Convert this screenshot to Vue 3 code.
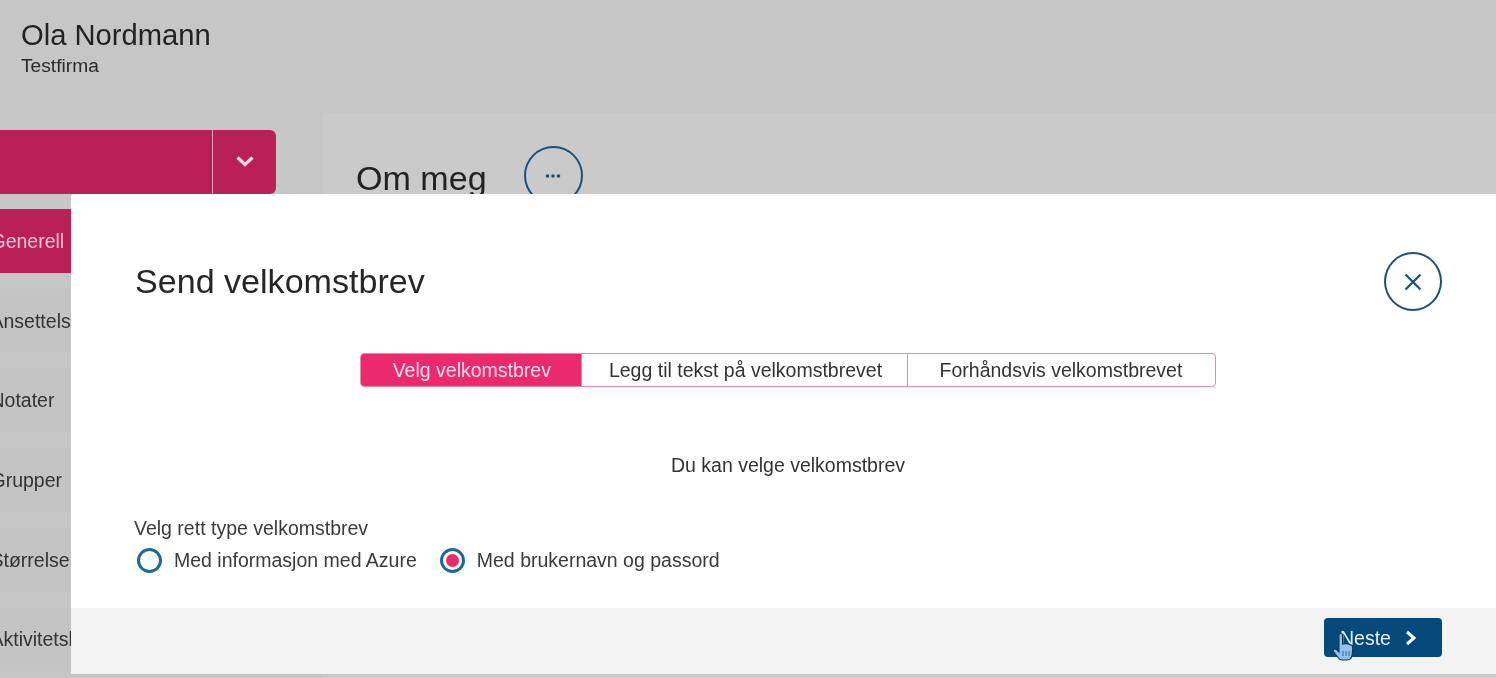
<script setup>
const navItems = [
  { label: 'Generell', active: true },
  { label: 'Ansettelse' },
  { label: 'Notater' },
  { label: 'Grupper' },
  { label: 'Størrelse' },
  { label: 'Aktivitetslogg' }
]
const steps = [
  { label: 'Velg velkomstbrev', active: true },
  { label: 'Legg til tekst på velkomstbrevet' },
  { label: 'Forhåndsvis velkomstbrevet' }
]
</script>

<template>
  <div class="page">
    <header class="head">
      <div class="name">Ola Nordmann</div>
      <div class="company">Testfirma</div>
    </header>
    <div class="body">
      <aside class="side">
        <div class="menu-btn">
          <div class="menu-label"></div>
          <div class="menu-arrow">
            <svg width="20" height="12" viewBox="0 0 20 12" fill="none"><path d="M2.5 2.5 L10 9.5 L17.5 2.5" stroke="#f3dbe3" stroke-width="3.4"/></svg>
          </div>
        </div>
        <nav class="nav">
          <div v-for="n in navItems" :key="n.label" class="nav-item" :class="{ on: n.active }">{{ n.label }}</div>
        </nav>
      </aside>
      <main class="main">
        <h1 class="about">Om meg</h1>
        <div class="round dots">
          <svg width="20" height="6" viewBox="0 0 20 6"><circle cx="4.5" cy="3" r="1.8" fill="#1f4a6b"/><circle cx="10" cy="3" r="1.8" fill="#1f4a6b"/><circle cx="15.5" cy="3" r="1.8" fill="#1f4a6b"/></svg>
        </div>
      </main>
    </div>

    <section class="modal">
      <div class="modal-main">
        <div class="modal-top">
          <h2 class="title">Send velkomstbrev</h2>
          <div class="round close">
            <svg width="18" height="18" viewBox="0 0 18 18" fill="none"><path d="M1.5 1.5 L16.5 16.5 M16.5 1.5 L1.5 16.5" stroke="#1c5684" stroke-width="2.4"/></svg>
          </div>
        </div>
        <div class="steps">
          <div v-for="s in steps" :key="s.label" class="step" :class="{ on: s.active }">{{ s.label }}</div>
        </div>
        <p class="lead">Du kan velge velkomstbrev</p>
        <div class="field-label">Velg rett type velkomstbrev</div>
        <div class="radios">
          <label class="radio"><span class="dot"></span>Med informasjon med Azure</label>
          <label class="radio"><span class="dot sel"></span>Med brukernavn og passord</label>
        </div>
      </div>
      <footer class="foot">
        <div class="next">
          <span class="next-text">Neste</span>
          <svg width="12" height="16" viewBox="0 0 12 16" fill="none"><path d="M2 2 L9 8 L2 14" stroke="#fff" stroke-width="3"/></svg>
          <svg class="hand" width="22" height="29" viewBox="0 0 22 29"><path d="M7 3 C7 1 10.5 1 10.5 3 L10.5 12 L14 11.5 L18 12.5 C20 13 20.8 14.3 20.8 16 L20.2 22 C20 25.5 18 28 15 28 L10 28 C8 28 7 27 6 25.5 L1.5 19.5 C0.4 17.8 2.6 16 4.2 17.4 L7 20 Z" fill="#93c0f3" stroke="#12334f" stroke-width="1.1"/><path d="M11 19 V24 M14 19 V24 M17 19 V24" stroke="#2a5a88" stroke-width="0.9"/></svg>
        </div>
      </footer>
    </section>
  </div>
</template>

<style>
html, body { margin: 0; overflow: hidden; }
</style>

<style scoped>
.page {
  position: relative;
  width: 1496px;
  height: 678px;
  overflow: hidden;
  background: #c6c6c6;
  font-family: "Liberation Sans", Arial, sans-serif;
  color: #2b2b2b;
  filter: blur(0.35px);
}
.head { height: 113px; box-sizing: border-box; padding: 18px 0 0 21px; }
.name { font-size: 29.2px; line-height: 34px; color: #222; }
.company { font-size: 19.2px; line-height: 22px; margin-top: 3px; color: #2a2a2a; }
.body { display: flex; align-items: flex-start; }
.side { width: 316px; margin-left: -40px; padding-top: 17px; flex: none; }
.menu-btn {
  height: 64px;
  display: flex;
  background: #b82056;
  border-radius: 0 6px 6px 0;
}
.menu-label { flex: 1; border-right: 1px solid #e0a0b8; }
.menu-arrow { width: 63px; display: flex; align-items: center; justify-content: center; padding-bottom: 3px; box-sizing: border-box; }
.nav { margin-top: 15px; display: flex; flex-direction: column; gap: 15.7px; }
.nav-item {
  height: 64px;
  line-height: 64px;
  padding-left: 30.5px;
  font-size: 19.5px;
  color: #333;
  background: #c4c4c4;
  white-space: nowrap;
}
.nav-item.on { background: #b82056; color: #f0c4d4; }
.main {
  margin-left: 47px;
  flex: 1;
  height: 565px;
  background: #cacaca;
  display: flex;
  align-items: flex-start;
  padding: 33px 0 0 33px;
}
.about { margin: 13px 0 0; font-size: 34.1px; line-height: 38px; font-weight: 400; color: #222; }
.round {
  width: 59px;
  height: 59px;
  box-sizing: border-box;
  border: 2px solid #1c4f78;
  border-radius: 50%;
  display: flex;
  align-items: center;
  justify-content: center;
  flex: none;
}
.dots { margin-left: 37px; }
.modal {
  position: absolute;
  left: 71px;
  right: 0;
  top: 194px;
  height: 480px;
  background: #fff;
  border-top-left-radius: 3px;
  display: flex;
  flex-direction: column;
}
.modal-main { flex: 1; padding: 0 54px 0 63px; }
.modal-top { display: flex; justify-content: space-between; padding-top: 58px; height: 59px; }
.title { margin: 10px 0 0 1px; font-size: 34.1px; line-height: 38px; font-weight: 400; color: #262626; }
.close { width: 58px; }
.steps {
  margin: 42px auto 0;
  width: max-content;
  height: 34px;
  box-sizing: border-box;
  display: flex;
  border: 1px solid #e88aa8;
  border-radius: 4px;
  overflow: hidden;
}
.step {
  line-height: 32px;
  font-size: 19.5px;
  color: #333;
  white-space: nowrap;
  border-left: 1px solid #e88aa8;
}
.step:nth-child(1) { border-left: none; padding: 0 30px 0 32px; }
.step:nth-child(2) { padding: 0 25px 0 27px; }
.step:nth-child(3) { padding: 0 33px 0 31.5px; }
.step.on { background: #ea2a6c; color: #fde2ec; }
.lead { margin: 67px 0 0; text-align: center; font-size: 19.5px; line-height: 22px; color: #333; }
.field-label { margin-top: 41px; font-size: 19.5px; line-height: 22px; color: #3a3a3a; }
.radios { display: flex; gap: 20px; margin-top: 8px; }
.radio { display: flex; align-items: center; gap: 12px; font-size: 19.5px; line-height: 26px; color: #3a3a3a; padding-left: 3px; }
.dot {
  width: 25px;
  height: 25px;
  box-sizing: border-box;
  border: 3px solid #1c6a94;
  border-radius: 50%;
  display: flex;
  align-items: center;
  justify-content: center;
}
.dot.sel::after { content: ""; width: 13px; height: 13px; border-radius: 50%; background: #ea2a6c; }
.foot {
  height: 66px;
  background: #f3f3f3;
  display: flex;
  justify-content: flex-end;
  align-items: flex-start;
  padding: 10px 54px 0 0;
  box-sizing: border-box;
}
.next {
  position: relative;
  width: 118px;
  height: 39px;
  box-sizing: border-box;
  background: #064a7c;
  border-radius: 4px;
  display: flex;
  align-items: center;
  gap: 14px;
  padding-left: 16px;
  color: #e8f1f8;
  font-size: 19.5px;
}
.next-text { padding-top: 1px; }
.hand { position: absolute; left: 8px; top: 14px; }
</style>
